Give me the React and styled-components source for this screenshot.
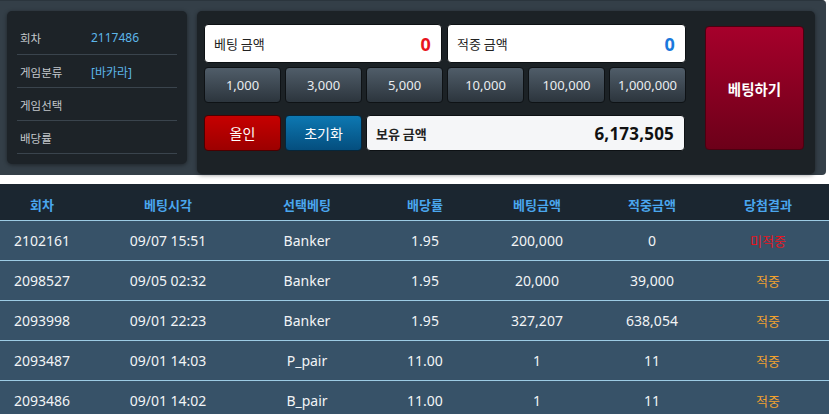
import React from "react";
import styled, { createGlobalStyle } from "styled-components";

const Global = createGlobalStyle`
  html, body { margin: 0; padding: 0; background: #ffffff; }
  body { font-family: "Noto Sans", "Noto Sans CJK KR", sans-serif; overflow: hidden; }
  * { box-sizing: border-box; }
`;

const Page = styled.div`
  width: 829px;
  height: 414px;
  overflow: hidden;
  background: #fff;
`;

const TopPanel = styled.div`
  width: 826px;
  height: 175px;
  background: #343f48;
  border-top: 1px solid #2b353d;
  border-radius: 0 4px 4px 0;
  display: flex;
  align-items: flex-start;
  padding: 10px 0 0 7px;
  gap: 10px;
  margin-bottom: 9px;
`;

const InfoCard = styled.div`
  width: 180px;
  height: 153px;
  background: #1d2328;
  border-radius: 5px;
  box-shadow: 0 1px 4px rgba(0, 0, 0, 0.45);
  padding: 10px 10px 0;
  display: flex;
  flex-direction: column;
`;

const InfoRow = styled.div`
  height: ${(p) => (p.$first ? 34 : 33)}px;
  border-bottom: 1px solid #3a444d;
  display: flex;
  align-items: center;
  padding-left: 3px;
  font-size: 11.5px;
  padding-top: ${(p) => (p.$first ? 0 : 1)}px;
`;

const InfoLabel = styled.span`
  width: 71px;
  color: #c3c7cb;
  font-family: "Noto Sans CJK KR", sans-serif;
`;

const InfoValue = styled.span`
  color: #5cb6ea;
  font-size: 12px;
  font-family: "Noto Sans", "Noto Sans CJK KR", sans-serif;
`;

const BetPanel = styled.div`
  width: 618px;
  height: 163px;
  background: #1c2226;
  border-radius: 5px;
  box-shadow: 0 1px 4px rgba(0, 0, 0, 0.45);
  padding: 13px 11px 0 7px;
  display: flex;
  align-items: flex-start;
`;

const BetArea = styled.div`
  width: 482px;
  display: flex;
  flex-direction: column;
`;

const AmountRow = styled.div`
  display: flex;
  gap: 5px;
  margin-bottom: 4px;
`;

const AmountBox = styled.div`
  width: ${(p) => p.$w}px;
  height: ${(p) => p.$h}px;
  background: ${(p) => p.$bg || "#ffffff"};
  border-radius: 4px;
  border: 1px solid #0d1114;
  display: flex;
  align-items: center;
  justify-content: space-between;
  padding: 0 10px 0 9px;
`;

const AmountLabel = styled.span`
  font-family: "Noto Sans CJK KR", sans-serif;
  font-size: 13px;
  color: #222;
  font-weight: ${(p) => (p.$bold ? 700 : 400)};
`;

const AmountValue = styled.span`
  font-family: "Noto Sans", sans-serif;
  font-weight: 700;
  font-size: ${(p) => p.$size || 18}px;
  color: ${(p) => p.$color};
  letter-spacing: 0.2px;
`;

const ChipRow = styled.div`
  display: grid;
  grid-template-columns: repeat(6, 77px);
  gap: 4px;
  margin-bottom: 12px;
`;

const Button = styled.button`
  height: 36px;
  margin: 0;
  padding: 0;
  border-radius: 4px;
  border: 1px solid ${(p) => p.$border || "#0e1215"};
  background: linear-gradient(to bottom, ${(p) => p.$from}, ${(p) => p.$to});
  color: ${(p) => p.$color || "#e9ecef"};
  font-family: "Noto Sans", "Noto Sans CJK KR", sans-serif;
  font-size: ${(p) => p.$size || 13}px;
  display: flex;
  align-items: center;
  justify-content: center;
  cursor: pointer;
`;

const ActionRow = styled.div`
  display: grid;
  grid-template-columns: 77px 77px 319px;
  gap: 4px;
`;

const BetButton = styled.button`
  width: 99px;
  height: 124px;
  margin: 2px 0 0 19px;
  border-radius: 4px;
  border: 1px solid #4c0010;
  background: linear-gradient(to bottom, #a6002b, #6c0019);
  color: #ffffff;
  font-family: "Noto Sans CJK KR", sans-serif;
  font-weight: 700;
  font-size: 14.5px;
  padding: 0;
  cursor: pointer;
`;

const Table = styled.div`
  width: 829px;
  display: flex;
  flex-direction: column;
`;

const cols = "84px 168px 110px 126px 98px 132px 100px";

const HeadRow = styled.div`
  display: grid;
  grid-template-columns: ${cols};
  height: 37px;
  background: #1b2630;
  border-bottom: 1px solid #9ccbe4;
  align-items: center;
  padding-top: 4px;
`;

const HeadCell = styled.div`
  text-align: center;
  color: #4aa6ee;
  font-family: "Noto Sans CJK KR", sans-serif;
  font-weight: 700;
  font-size: 13px;
`;

const BodyRow = styled.div`
  display: grid;
  grid-template-columns: ${cols};
  height: 40px;
  background: #375268;
  border-bottom: 1px solid #9ccbe4;
  align-items: center;
`;

const Cell = styled.div`
  text-align: center;
  color: ${(p) => p.$color || "#f2f4f6"};
  font-family: "Noto Sans", "Noto Sans CJK KR", sans-serif;
  font-size: ${(p) => (p.$kr ? 13 : 14)}px;
`;

const chips = ["1,000", "3,000", "5,000", "10,000", "100,000", "1,000,000"];

const rows = [
  ["2102161", "09/07 15:51", "Banker", "1.95", "200,000", "0", "미적중"],
  ["2098527", "09/05 02:32", "Banker", "1.95", "20,000", "39,000", "적중"],
  ["2093998", "09/01 22:23", "Banker", "1.95", "327,207", "638,054", "적중"],
  ["2093487", "09/01 14:03", "P_pair", "11.00", "1", "11", "적중"],
  ["2093486", "09/01 14:02", "B_pair", "11.00", "1", "11", "적중"],
];

const heads = ["회차", "베팅시각", "선택베팅", "배당률", "베팅금액", "적중금액", "당첨결과"];

export default function App() {
  return (
    <Page>
      <Global />
      <TopPanel>
        <InfoCard>
          <InfoRow $first>
            <InfoLabel>회차</InfoLabel>
            <InfoValue>2117486</InfoValue>
          </InfoRow>
          <InfoRow>
            <InfoLabel>게임분류</InfoLabel>
            <InfoValue>[바카라]</InfoValue>
          </InfoRow>
          <InfoRow>
            <InfoLabel>게임선택</InfoLabel>
            <InfoValue />
          </InfoRow>
          <InfoRow>
            <InfoLabel>배당률</InfoLabel>
            <InfoValue />
          </InfoRow>
        </InfoCard>
        <BetPanel>
          <BetArea>
            <AmountRow>
              <AmountBox $w={238} $h={39}>
                <AmountLabel>베팅 금액</AmountLabel>
                <AmountValue $color="#e8141e">0</AmountValue>
              </AmountBox>
              <AmountBox $w={239} $h={39}>
                <AmountLabel>적중 금액</AmountLabel>
                <AmountValue $color="#1a78dc">0</AmountValue>
              </AmountBox>
            </AmountRow>
            <ChipRow>
              {chips.map((c) => (
                <Button key={c} $from="#505d69" $to="#2c353d">
                  {c}
                </Button>
              ))}
            </ChipRow>
            <ActionRow>
              <Button $from="#c60000" $to="#9c0000" $border="#4a0000" $size={14} $color="#fff">
                올인
              </Button>
              <Button $from="#0d78b2" $to="#044e7e" $border="#06263a" $size={14} $color="#fff">
                초기화
              </Button>
              <AmountBox $w={319} $h={36} $bg="#f5f6f8">
                <AmountLabel $bold>보유 금액</AmountLabel>
                <AmountValue $color="#111" $size={17}>
                  6,173,505
                </AmountValue>
              </AmountBox>
            </ActionRow>
          </BetArea>
          <BetButton>베팅하기</BetButton>
        </BetPanel>
      </TopPanel>
      <Table>
        <HeadRow>
          {heads.map((h) => (
            <HeadCell key={h}>{h}</HeadCell>
          ))}
        </HeadRow>
        {rows.map((r) => (
          <BodyRow key={r[0]}>
            {r.slice(0, 6).map((v, i) => (
              <Cell key={i}>{v}</Cell>
            ))}
            <Cell $kr $color={r[6] === "미적중" ? "#e8141e" : "#f2a22e"}>
              {r[6]}
            </Cell>
          </BodyRow>
        ))}
      </Table>
    </Page>
  );
}
